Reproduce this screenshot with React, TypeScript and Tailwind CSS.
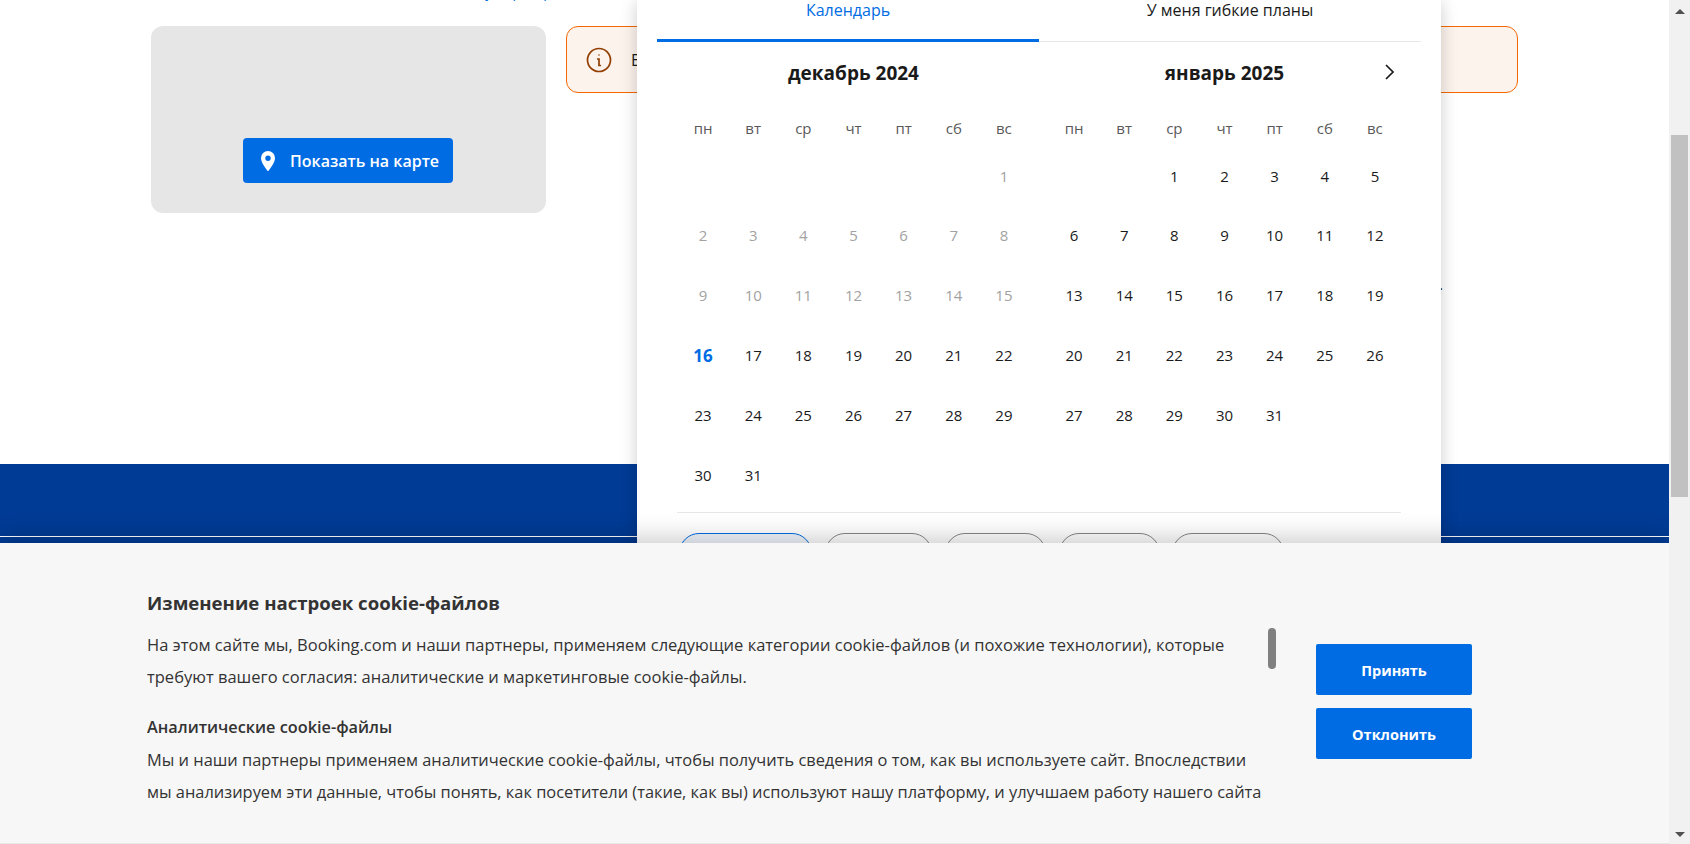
const FONT = "font-['Open_Sans','Noto_Sans',sans-serif]"

type Day = number | null

const WEEKDAYS = ['пн', 'вт', 'ср', 'чт', 'пт', 'сб', 'вс']

function monthDays(offset: number, total: number): Day[] {
  const days: Day[] = []
  for (let i = 0; i < offset; i++) days.push(null)
  for (let d = 1; d <= total; d++) days.push(d)
  return days
}

function Month({ title, days, pastUntil, today }: { title: string; days: Day[]; pastUntil?: number; today?: number }) {
  return (
    <div className="w-[351px]">
      <div className="flex h-[30px] items-center justify-center text-[19px] leading-[30px] font-bold text-[#1a1a1a]">{title}</div>
      <div className="mt-[28px] grid grid-cols-7">
        {WEEKDAYS.map((d) => (
          <div key={d} className="h-[24px] text-center text-[15px] leading-[24px] text-[#595959]">{d}</div>
        ))}
      </div>
      <div className="mt-[6px] grid grid-cols-7">
        {days.map((d, i) => (
          <div
            key={i}
            className={
              'flex h-[59.8px] items-center justify-center ' +
              (d === today
                ? 'text-[17px] font-bold text-[#006ce4]'
                : pastUntil && d && d < pastUntil
                  ? 'text-[15px] text-[#a2a2a2]'
                  : 'text-[15px] text-[#1a1a1a]')
            }
          >
            {d}
          </div>
        ))}
      </div>
    </div>
  )
}

function DatePicker() {
  return (
    <div className="absolute top-0 left-[637px] h-[560px] w-[804px] bg-white px-[20px] shadow-[0_2px_16px_rgba(0,0,0,0.2)]">
      <div className="flex h-[42px] border-b border-[#e7e7e7]">
        <div className="h-[42px] w-[382px] border-b-[3px] border-[#006ce4] text-center text-[16px] leading-[20px] text-[#006ce4]">Календарь</div>
        <div className="flex-1 text-center text-[16px] leading-[20px] text-[#1a1a1a]">У меня гибкие планы</div>
      </div>
      <div className="relative mt-[16px] flex gap-[20px] pl-[21px]">
        <Month title="декабрь 2024" days={monthDays(6, 31)} pastUntil={16} today={16} />
        <Month title="январь 2025" days={monthDays(2, 31)} />
        <svg className="absolute top-[2px] right-[20px]" width="24" height="24" viewBox="0 0 24 24" fill="none" stroke="#1a1a1a" strokeWidth="1.7">
          <path d="M9 5l7 7-7 7" />
        </svg>
      </div>
      <div className="mx-[20px] mt-[7px] border-t border-[#e7e7e7]" />
      <div className="mt-[20px] ml-[22px] flex">
        <div className="h-[40px] w-[133px] rounded-[20px] border border-[#006ce4] bg-[#f0f6fd]" />
        <div className="ml-[13px] h-[40px] w-[107px] rounded-[20px] border border-[#868686]" />
        <div className="ml-[13px] h-[40px] w-[101px] rounded-[20px] border border-[#868686]" />
        <div className="ml-[13px] h-[40px] w-[101px] rounded-[20px] border border-[#868686]" />
        <div className="ml-[12px] h-[40px] w-[112px] rounded-[20px] border border-[#868686]" />
      </div>
    </div>
  )
}

function CookieBanner() {
  return (
    <div className="absolute right-0 bottom-0 left-0 flex h-[301px] border-b border-[#e7e7e7] bg-[#f7f7f7] pt-[46px] pl-[147px] shadow-[0_-4px_24px_rgba(0,0,0,0.22)]">
      <div className="relative h-[220px] w-[1118px] overflow-hidden text-[#333333]">
        <div className="text-[18.6px] leading-[28px] font-bold">Изменение настроек cookie-файлов</div>
        <p className="mt-[12px] text-[16.5px] leading-[32px]">
          На этом сайте мы, Booking.com и наши партнеры, применяем следующие категории cookie-файлов (и похожие технологии), которые требуют вашего согласия: аналитические и маркетинговые cookie-файлы.
        </p>
        <div className="mt-[22px] text-[16.3px] leading-[24px] font-semibold">Аналитические cookie-файлы</div>
        <p className="mt-[5px] text-[16.4px] leading-[32px]">
          Мы и наши партнеры применяем аналитические cookie-файлы, чтобы получить сведения о том, как вы используете сайт. Впоследствии мы анализируем эти данные, чтобы понять, как посетители (такие, как вы) используют нашу платформу, и улучшаем работу нашего сайта
        </p>
      </div>
      <div className="mt-[39px] ml-[3px] h-[41px] w-[8px] rounded-[4px] bg-[#808080]" />
      <div className="mt-[55px] ml-[40px] flex w-[156px] flex-col gap-[13px]">
        <button className="h-[51px] rounded-[2px] bg-[#006ce4] pt-[2px] text-[14.5px] font-bold text-white">Принять</button>
        <button className="h-[51px] rounded-[2px] bg-[#006ce4] pt-[2px] text-[14.5px] font-bold text-white">Отклонить</button>
      </div>
    </div>
  )
}

export default function App() {
  return (
    <div className={`flex h-[844px] w-[1690px] overflow-hidden bg-white ${FONT}`}>
      <div className="relative h-full w-[1669px] overflow-hidden">
        <div className="h-[464px] pl-[151px]">
          {/* line above is scrolled off, only the descenders still show */}
          <div className="h-[26px] overflow-hidden pl-[304px]">
            <div className="mt-[-18px] text-[14px] leading-[20px] text-[#006ce4]">дом у парка, рядом</div>
          </div>
          <div className="flex gap-[20px]">
            <div className="flex h-[187px] w-[395px] items-end justify-center rounded-[12px] bg-[#e6e6e6] pr-[1px] pb-[30px]">
              <button className="flex h-[45px] w-[210px] items-center gap-[13px] rounded-[4px] bg-[#006ce4] pl-[16px] text-[16px] font-semibold text-white">
                <svg width="18" height="24" viewBox="0 0 18 24" fill="#ffffff">
                  <path fillRule="evenodd" d="M9 2a7 7 0 0 0-7 7c0 4.800 5.800 11.900 6.400 12.700a.8.8 0 0 0 1.200 0C10.200 20.900 16 13.800 16 9a7 7 0 0 0-7-7zm0 4.500a2.700 2.700 0 1 1 0 5.400 2.700 2.700 0 0 1 0-5.400z" />
                </svg>
                Показать на карте
              </button>
            </div>
            <div className="w-[952px]">
              <div className="flex h-[67px] items-center gap-[19px] rounded-[12px] border border-[#f56700] bg-[#fdf3ed] pl-[19px]">
                <svg width="26" height="26" viewBox="0 0 26 26" fill="none" stroke="#923e01" strokeWidth="1.700">
                  <circle cx="13" cy="13" r="11.500" />
                  <path d="M11 12h2v6.500h2M13 7.500v1" />
                </svg>
                <span className="text-[16px] text-[#1a1a1a]">Вы выбрали даты</span>
              </div>
              {/* rest of this line sits behind the date picker */}
              <p className="mt-[182px] w-[877px] text-right text-[14px] leading-[20px] text-[#1a1a1a]">.</p>
            </div>
          </div>
        </div>
        <div className="h-[380px] bg-[#003b95] pt-[72px]">
          <div className="h-[1px] bg-white" />
        </div>
        <DatePicker />
        <CookieBanner />
      </div>
      <div className="flex h-full w-[21px] flex-col items-center bg-[#f1f1f1]">
        <div className="mt-[9px] h-0 w-0 border-x-[5px] border-b-[5px] border-x-transparent border-b-[#505050]" />
        <div className="mt-[121px] h-[362px] w-[17px] bg-[#c1c1c1]" />
        <div className="mt-auto mb-[7px] h-0 w-0 border-x-[5px] border-t-[5px] border-x-transparent border-t-[#505050]" />
      </div>
    </div>
  )
}
